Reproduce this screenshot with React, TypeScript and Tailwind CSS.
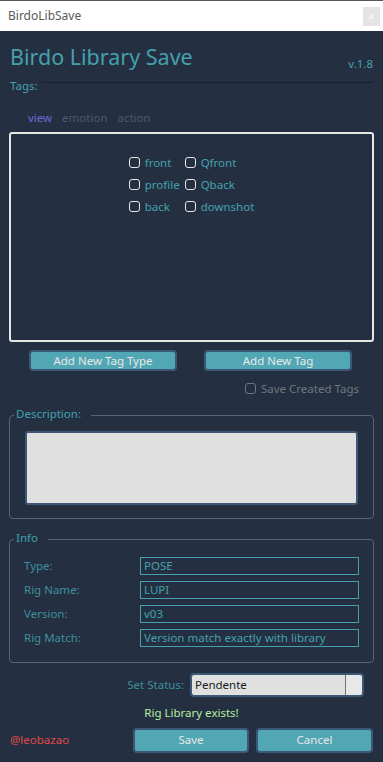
import React from "react";

const teal = "text-[#45a0ad]";

function Check({ label }: { label: string }) {
  return (
    <label className="flex items-center gap-[5px] h-[22px]">
      <span className="w-[11px] h-[11px] border border-[#e6e6e6] rounded-[3px]" />
      <span>{label}</span>
    </label>
  );
}

function InfoRow({ label, value }: { label: string; value: string }) {
  return (
    <div className="flex items-center h-[24px]">
      <span className="w-[116px] text-[#3f8e9c]">{label}</span>
      <div className="flex-1 h-[18px] border border-[#45a0ad] px-[3px] leading-[16px] text-[#45a0ad]">
        {value}
      </div>
    </div>
  );
}

export default function App() {
  return (
    <div
      className="w-[383px] h-[762px] bg-[#243041] flex flex-col text-[11.5px] overflow-hidden"
      style={{ fontFamily: '"Noto Sans", "Open Sans", sans-serif' }}
    >
      {/* window title bar */}
      <div className="border-t border-[#555] h-[31px] bg-white flex items-center justify-between pl-[8px] pr-[3px]">
        <span className="text-[#5a5a5a] text-[12px]">BirdoLibSave</span>
        <div className="w-[17px] h-[19px] bg-[#e4e4e4] flex items-center justify-center text-white text-[9px]">
          x
        </div>
      </div>

      <div className="flex flex-col px-[9px]">
        <div className="flex items-end justify-between mt-[10px] pl-[1px]">
          <h1 className={`text-[21.5px] leading-[32px] ${teal}`}>Birdo Library Save</h1>
          <span className={`${teal} mb-[1px] mr-[1px]`}>v.1.8</span>
        </div>

        <div className="flex items-center gap-[4px] mt-[4px] pl-[1px]">
          <span className={teal}>Tags:</span>
          <div className="flex-1 h-px bg-[#18202c] -mt-[6px] mr-[1px]" />
        </div>

        <div className="flex gap-[10px] pl-[19px] mt-[16px] leading-[16px]">
          <span className="text-[#6a6ad8]">view</span>
          <span className="text-[#4a5a70]">emotion</span>
          <span className="text-[#4a5a70]">action</span>
        </div>

        <div className="mt-[6px] h-[210px] border-2 border-[#e6e6e6] rounded-[3px] flex justify-center pt-[17px]">
          <div className="flex gap-[5px] text-[#45a0ad]">
            <div className="flex flex-col">
              <Check label="front" />
              <Check label="profile" />
              <Check label="back" />
            </div>
            <div className="flex flex-col">
              <Check label="Qfront" />
              <Check label="Qback" />
              <Check label="downshot" />
            </div>
          </div>
        </div>

        <div className="flex mt-[8px] pl-[20px] gap-[27px]">
          <button className="w-[148px] h-[21px] bg-[#52a7b4] border-2 border-[#3c5877] rounded-[4px] text-[#e8e8e8] leading-[16px]">
            Add New Tag Type
          </button>
          <button className="w-[148px] h-[21px] bg-[#52a7b4] border-2 border-[#3c5877] rounded-[4px] text-[#e8e8e8] leading-[16px]">
            Add New Tag
          </button>
        </div>

        <div className="flex justify-end mt-[9px] pr-[15px] text-[#6e7680]">
          <label className="flex items-center gap-[5px]">
            <span className="w-[11px] h-[11px] border border-[#6e7680] rounded-[3px]" />
            <span>Save Created Tags</span>
          </label>
        </div>

        {/* Description group */}
        <div className="relative mt-[17px] h-[104px] border border-[#5b6470] rounded-[4px] px-[15px] pt-[15px]">
          <span className={`absolute -top-[11px] left-[4px] bg-[#243041] pl-[2px] pr-[10px] ${teal}`}>
            Description:
          </span>
          <div className="h-[74px] bg-[#e0e0e0] border-2 border-[#3c5877] rounded-[3px]" />
        </div>

        {/* Info group */}
        <div className="relative mt-[20px] h-[124px] border border-[#5b6470] rounded-[4px] px-[14px] pt-[14px]">
          <span className={`absolute -top-[11px] left-[4px] bg-[#243041] pl-[2px] pr-[10px] ${teal}`}>Info</span>
          <InfoRow label="Type:" value="POSE" />
          <InfoRow label="Rig Name:" value="LUPI" />
          <InfoRow label="Version:" value="v03" />
          <InfoRow label="Rig Match:" value="Version match exactly with library" />
        </div>

        <div className="flex items-center justify-end mt-[10px] pr-[10px] gap-[6px]">
          <span className="text-[#3f8e9c]">Set Status:</span>
          <div className="w-[174px] h-[24px] bg-[#e0e0e0] border-2 border-[#3c5877] rounded-[4px] flex items-center">
            <span className="flex-1 pl-[3px] text-[#1a1a1a]">Pendente</span>
            <div className="w-[17px] h-full border-l border-[#707070] bg-[#e8e8e8] rounded-r-[3px]" />
          </div>
        </div>

        <div className="text-center text-[#b6eea0] mt-[6px] leading-[20px]">Rig Library exists!</div>

        <div className="flex items-center mt-[5px] pr-[1px]">
          <span className="text-[#e04848] pl-[1px]">@leobazao</span>
          <div className="flex-1" />
          <button className="w-[116px] h-[25px] bg-[#52a7b4] border-2 border-[#3c5877] rounded-[4px] text-[#e8e8e8]">
            Save
          </button>
          <button className="ml-[7px] w-[117px] h-[25px] bg-[#52a7b4] border-2 border-[#3c5877] rounded-[4px] text-[#e8e8e8]">
            Cancel
          </button>
        </div>
      </div>
    </div>
  );
}
